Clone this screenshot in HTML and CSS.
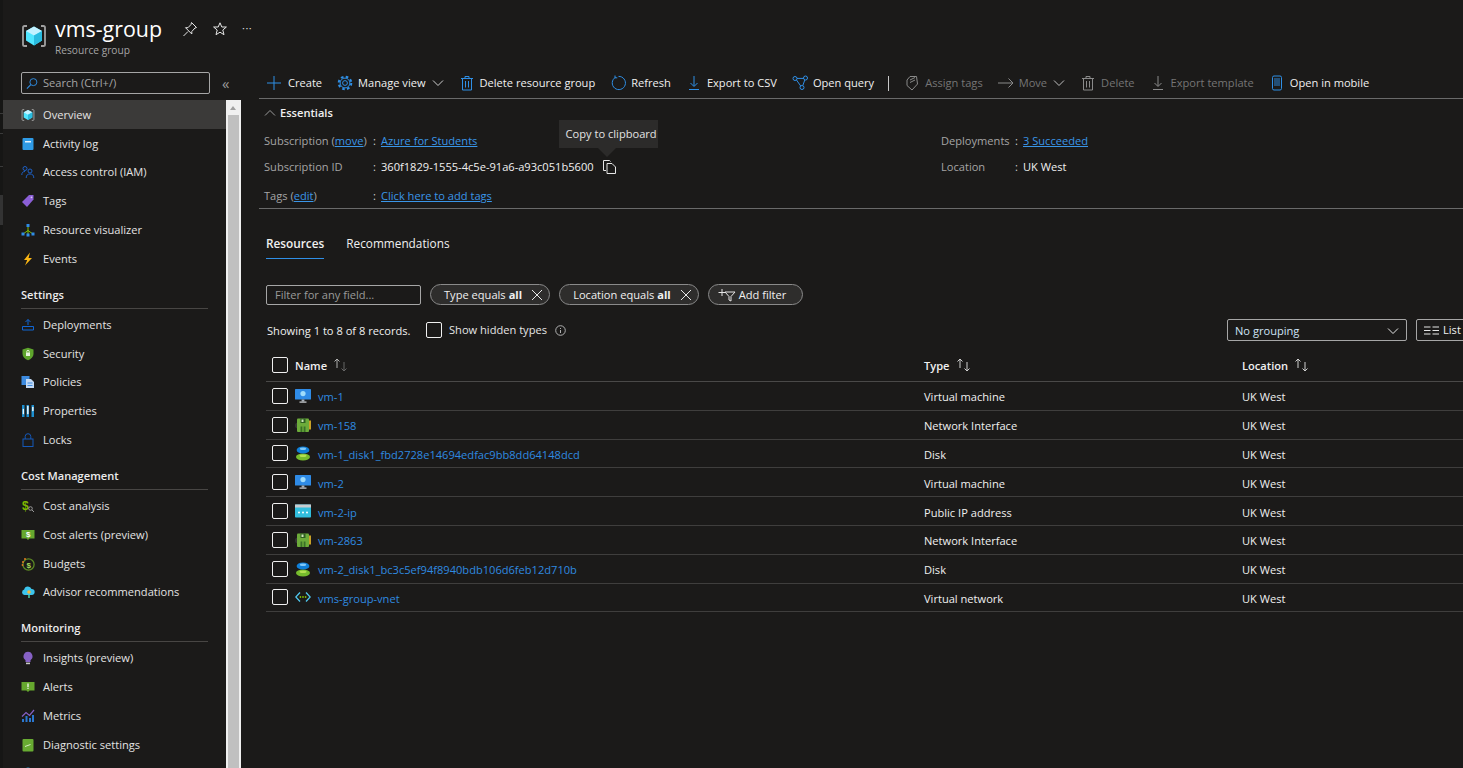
FILE: index.html
```html
<!DOCTYPE html>
<html lang="en">
<head>
<meta charset="utf-8">
<title>vms-group</title>
<link rel="stylesheet" href="styles.css">
</head>
<body>
<svg class="defs" width="0" height="0" aria-hidden="true">
  <symbol id="i-rg" viewBox="0 0 26 26">
    <path d="M6 3H3.600Q2 3 2 4.600V21.400Q2 23 3.600 23H6M20 3h2.400Q24 3 24 4.600V21.400Q24 23 22.400 23H20" fill="none" stroke="#a0a0a0" stroke-width="1.800"/>
    <path d="M13 3.500 21 8v9.600L13 22.500 5 17.600V8z" fill="#50e6ff"/>
    <path d="M13 3.500 21 8l-8 4.600L5 8z" fill="#c3f1ff"/>
    <path d="M13 12.600 21 8v9.600L13 22.500z" fill="#29bade"/>
  </symbol>
  <symbol id="i-vm" viewBox="0 0 16 16">
    <rect x="0" y="1" width="16" height="10.500" rx=".6" fill="#2f8be6"/>
    <circle cx="8" cy="5.600" r="2.600" fill="#9fdcfb"/>
    <path d="M6.600 11.500h2.800v2H6.600z" fill="#a8b0b8"/><path d="M4.500 13.500h7v1.200h-7z" fill="#d0d4d8"/>
  </symbol>
  <symbol id="i-nic" viewBox="0 0 16 16">
    <circle cx="3" cy="8.500" r="3" fill="#333"/>
    <rect x="2" y="1.500" width="12" height="13.500" rx="1" fill="#6cab3a"/>
    <rect x="14" y="3.500" width="2" height="9" fill="#c9a227"/>
    <path d="M5.500 1.500h5V6h-5z" fill="#2f5f22"/>
    <path d="M5.500 9.500h1.800V15H5.500zM8.700 9.500h1.800V15H8.700z" fill="#3a7028"/>
    <rect x="6.500" y="2.500" width="2" height="2.500" fill="#cfe9b8"/>
  </symbol>
  <symbol id="i-disk" viewBox="0 0 16 16">
    <ellipse cx="8" cy="12" rx="7" ry="3.400" fill="#76bc2d"/>
    <ellipse cx="8" cy="10.800" rx="3.500" ry="1.300" fill="#b4e051"/>
    <ellipse cx="8" cy="5" rx="6.400" ry="3.600" fill="#0f7fd8"/>
    <ellipse cx="8" cy="3.800" rx="3.200" ry="1.300" fill="#7fc8f8"/>
  </symbol>
  <symbol id="i-ip" viewBox="0 0 16 16">
    <rect x="0" y="1.500" width="16" height="13" rx=".8" fill="#32bedd"/>
    <rect x="0" y="1.500" width="16" height="3" fill="#c8ccd0"/>
    <circle cx="4" cy="9.500" r="1" fill="#fff"/><circle cx="8" cy="9.500" r="1" fill="#fff"/><circle cx="12" cy="9.500" r="1" fill="#fff"/>
  </symbol>
  <symbol id="i-vnet" viewBox="0 0 16 16">
    <path d="M5 3.500.8 8 5 12.500M11 3.500 15.200 8 11 12.500" fill="none" stroke="#50c8ef" stroke-width="1.300"/>
    <circle cx="5.400" cy="8" r=".9" fill="#7fba00"/><circle cx="8" cy="8" r=".9" fill="#7fba00"/><circle cx="10.600" cy="8" r=".9" fill="#7fba00"/>
  </symbol>
  <symbol id="i-chev" viewBox="0 0 12 8"><path d="M1 1.500 6 6.500l5-5" fill="none" stroke="currentColor"/></symbol>
  <symbol id="i-x" viewBox="0 0 12 12"><path d="M1 1 11 11M11 1 1 11" fill="none" stroke="currentColor"/></symbol>
  <symbol id="i-gear" viewBox="0 0 16 16"><circle cx="8" cy="8" r="2.400" fill="none" stroke="currentColor"/><circle cx="8" cy="8" r="4.900" fill="none" stroke="currentColor"/><circle cx="8" cy="8" r="6.300" fill="none" stroke="currentColor" stroke-width="2" stroke-dasharray="2.600 2.350"/></symbol>
  <symbol id="i-trash" viewBox="0 0 16 16"><path d="M3.500 3.500h9V15h-9zM2 3.500h12M6 3.500V1.500h4v2M6.500 6v6.500M9.500 6v6.500" fill="none" stroke="currentColor"/></symbol>
  <symbol id="i-down" viewBox="0 0 16 16"><path d="M8 1v10M4.500 8 8 11.500 11.500 8M3 14.500h10" fill="none" stroke="currentColor"/></symbol>
</svg>

<div class="app">
  <div class="edge">
    <span class="edge-line first"></span>
    <span class="edge-line second"></span>
    <span class="edge-line third"></span>
    <span class="edge-block"></span>
  </div>
  <aside class="side">
    <header class="title">
      <svg class="title-logo"><use href="#i-rg"/></svg>
      <div class="title-text">
        <h1>vms-group</h1>
        <p>Resource group</p>
      </div>
      <div class="title-actions">
        <svg width="16" height="16" viewBox="0 0 16 16"><path d="M9.500 1.500 14.500 6.500 13 7 9.800 10.500V13L3.500 6.700H6L9 3.500zM6 10.500 1.500 15" fill="none" stroke="#e6e6e6"/></svg>
        <svg width="16" height="16" viewBox="0 0 16 16"><path d="M8 1.800 9.800 6h4.600l-3.600 3 1.200 4.700L8 11.200l-4 2.500L5.200 9 1.600 6h4.600z" fill="none" stroke="#e6e6e6"/></svg>
        <span class="more">···</span>
      </div>
    </header>
    <div class="search-row">
      <label class="search">
        <svg width="12" height="13" viewBox="0 0 13 13"><circle cx="8" cy="5" r="3.800" fill="none" stroke="#2f8fe6"/><path d="M5.200 7.800 1 12" stroke="#2f8fe6" stroke-width="1.200"/></svg>
        <span>Search (Ctrl+/)</span>
      </label>
      <span class="collapse">«</span>
    </div>
    <div class="menu-wrap">
      <nav class="menu">
        <a class="item active"><svg class="mi"><use href="#i-rg"/></svg>Overview</a>
        <a class="item"><svg class="mi" viewBox="0 0 14 14"><rect x="1.500" y="1" width="11" height="12" rx="1" fill="#2f9be6"/><rect x="4" y="4" width="6" height="1.500" fill="#e5f3fd"/></svg>Activity log</a>
        <a class="item"><svg class="mi" viewBox="0 0 14 14"><circle cx="4" cy="3.500" r="2" fill="none" stroke="#1d5fc4"/><path d="M.8 10c0-2.500 1.200-3.500 3.200-3.500" fill="none" stroke="#1d5fc4"/><circle cx="9" cy="6" r="2" fill="none" stroke="#1d5fc4"/><path d="M5.200 13c0-3 1.500-4 3.800-4s3.800 1 3.800 4" fill="none" stroke="#1d5fc4"/></svg>Access control (IAM)</a>
        <a class="item"><svg class="mi" viewBox="0 0 14 14"><path d="M8 1h4.500v4.500L6 13 1 8z" fill="#8b5fd6"/><circle cx="10.500" cy="3.300" r=".9" fill="#d9c9f5"/></svg>Tags</a>
        <a class="item"><svg class="mi" viewBox="0 0 14 14"><path d="M7 4v4M7 7.500 2 11M7 7.500l5 3.500M7 7.500V12" stroke="#7fba00" fill="none"/><rect x="5.500" y="1" width="3" height="3" fill="#2f8be6"/><rect x=".5" y="9.500" width="3" height="3" fill="#2f8be6"/><rect x="5.500" y="10.500" width="3" height="3" fill="#2f8be6"/><rect x="10.500" y="9.500" width="3" height="3" fill="#2f8be6"/></svg>Resource visualizer</a>
        <a class="item"><svg class="mi" viewBox="0 0 14 14"><path d="M9 .5 3 8h3.200L4 13.500 11 6H7.500z" fill="#fcb714"/></svg>Events</a>

        <h2>Settings</h2>
        <a class="item"><svg class="mi" viewBox="0 0 14 14"><path d="M1.500 8.500h11v3.500h-11zM7 7V1.500M4.500 4 7 1.500 9.500 4" fill="none" stroke="#1166d4"/></svg>Deployments</a>
        <a class="item"><svg class="mi" viewBox="0 0 14 14"><path d="M7 .8 12.500 2.500V7c0 3-2.500 5-5.500 6.300C4 12 1.500 10 1.500 7V2.500z" fill="#5ea42c"/><rect x="5" y="5.500" width="4" height="3.500" fill="#e8f3dc"/><path d="M5.800 5.500V4.500a1.200 1.200 0 0 1 2.400 0v1" fill="none" stroke="#e8f3dc"/></svg>Security</a>
        <a class="item"><svg class="mi" viewBox="0 0 14 14"><rect x=".5" y="1" width="8" height="9" fill="#3d8be0"/><path d="M5 4h5l3 3v6H5z" fill="#c3daf5"/><path d="M6.500 8h5M6.500 10.500h5" stroke="#3d8be0"/></svg>Policies</a>
        <a class="item"><svg class="mi" viewBox="0 0 14 14"><path d="M1 1h2.500v12H1zM5.500 1H8v12H5.500zM10.500 1H13v12h-2.500z" fill="#1c8fd0"/><path d="M2.200 5h.3v5h-.3zM6.700 2h.3v8h-.3zM11.700 3h.3v4h-.3z" fill="#e6f4fb" stroke="#e6f4fb"/></svg>Properties</a>
        <a class="item"><svg class="mi" viewBox="0 0 14 14"><rect x="2" y="6" width="10" height="7.500" fill="none" stroke="#1558b8"/><path d="M4.200 6V3.500a2.800 2.800 0 0 1 5.600 0V6" fill="none" stroke="#1558b8"/></svg>Locks</a>

        <h2>Cost Management</h2>
        <a class="item"><svg class="mi" viewBox="0 0 14 14"><text class="glyph" x="1" y="11" fill="#7fba00">$</text><circle cx="9.500" cy="9.500" r="1.800" fill="none" stroke="#999"/><path d="M11 11l2 2" stroke="#999"/></svg>Cost analysis</a>
        <a class="item"><svg class="mi" viewBox="0 0 14 14"><path d="M.5 2h13v8.500H8.500L7 12 5.500 10.500h-5z" fill="#66a82e"/><text class="glyph small" x="5" y="8.500" fill="#fff">$</text></svg>Cost alerts (preview)</a>
        <a class="item"><svg class="mi" viewBox="0 0 14 14"><circle cx="7.500" cy="7.500" r="5.600" fill="none" stroke="#5c8a24" stroke-width="1.300"/><text class="glyph small" x="5.500" y="10.500" fill="#a4d957">$</text><circle cx="2" cy="5" r="1" fill="#e07a1f"/><circle cx="4" cy="2" r="1" fill="#e07a1f"/><circle cx="1.500" cy="8" r=".9" fill="#e07a1f"/></svg>Budgets</a>
        <a class="item"><svg class="mi" viewBox="0 0 14 14"><path d="M3.500 10a2.800 2.800 0 0 1-.3-5.500A3.800 3.800 0 0 1 10.500 4a3 3 0 0 1 .3 6z" fill="#3cc4ec"/><circle cx="8" cy="7" r="1.800" fill="#f5b73a"/><path d="M7.200 10h1.600v3H7.200z" fill="#49c6a0"/></svg>Advisor recommendations</a>

        <h2>Monitoring</h2>
        <a class="item"><svg class="mi" viewBox="0 0 14 14"><path d="M7 .8a4.600 4.600 0 0 1 2.500 8.400V11h-5V9.200A4.600 4.600 0 0 1 7 .8z" fill="#8661c5"/><rect x="5" y="11.600" width="4" height="1.600" fill="#c8c8c8"/></svg>Insights (preview)</a>
        <a class="item"><svg class="mi" viewBox="0 0 14 14"><path d="M.5 2h13v8.500H8.500L7 12 5.500 10.500h-5z" fill="#66a82e"/><rect x="6.400" y="3.500" width="1.200" height="3.500" fill="#fff"/><rect x="6.400" y="7.700" width="1.200" height="1.200" fill="#fff"/></svg>Alerts</a>
        <a class="item"><svg class="mi" viewBox="0 0 14 14"><path d="M1 10h2v3H1zM4.500 7h2v6h-2zM8 9h2v4H8zM11 6h2v7h-2z" fill="#2a77d0"/><path d="M1 7.500 5 3.500l3.500 3L13 1" fill="none" stroke="#8661c5" stroke-width="1.200"/></svg>Metrics</a>
        <a class="item"><svg class="mi" viewBox="0 0 14 14"><rect x="1.500" y="1" width="11" height="12.500" rx="1" fill="#68ab32"/><path d="M4 8.500 9.500 6.500" stroke="#d8edc4"/></svg>Diagnostic settings</a>
        <a class="item"><svg class="mi" viewBox="0 0 14 14"><circle cx="7" cy="5" r="4.500" fill="#2fa0e0"/></svg></a>
      </nav>
      <div class="scrollbar">
        <span class="arrow"></span>
        <span class="thumb"></span>
      </div>
    </div>
  </aside>

  <main class="main">
    <div class="toolbar">
      <a class="tool"><svg class="ti" viewBox="0 0 16 16"><path d="M7 1v14M0 8h14" stroke="currentColor" fill="none"/></svg>Create</a>
      <a class="tool"><svg class="ti"><use href="#i-gear"/></svg>Manage view<svg class="chev"><use href="#i-chev"/></svg></a>
      <a class="tool"><svg class="ti"><use href="#i-trash"/></svg>Delete resource group</a>
      <a class="tool"><svg class="ti" viewBox="0 0 16 16"><path d="M5.500 2.300a6.600 6.600 0 1 0 3-.9M5 .5v2.300h2.300" fill="none" stroke="currentColor"/></svg>Refresh</a>
      <a class="tool"><svg class="ti"><use href="#i-down"/></svg>Export to CSV</a>
      <a class="tool"><svg class="ti" viewBox="0 0 16 16"><circle cx="3" cy="3.500" r="2" fill="none" stroke="currentColor"/><circle cx="13.500" cy="3" r="2" fill="none" stroke="currentColor"/><circle cx="10" cy="12.500" r="2" fill="none" stroke="currentColor"/><path d="M5 3.400h6.500M4.500 5l4.200 6M12.800 5l-2 5.500" fill="none" stroke="currentColor"/></svg>Open query</a>
      <span class="tool-sep"></span>
      <a class="tool off"><svg class="ti" viewBox="0 0 16 16"><path d="M6 1.500h6.500l1 7.500L8 15 3 10.500V5zM6 5l5-2.500M6 7.500l5-2.500" fill="none" stroke="currentColor"/></svg>Assign tags</a>
      <a class="tool off"><svg class="ti" viewBox="0 0 16 16"><path d="M0 8h15M10.500 3.500 15 8l-4.500 4.500" fill="none" stroke="currentColor"/></svg>Move<svg class="chev"><use href="#i-chev"/></svg></a>
      <a class="tool off"><svg class="ti"><use href="#i-trash"/></svg>Delete</a>
      <a class="tool off"><svg class="ti"><use href="#i-down"/></svg>Export template</a>
      <a class="tool"><svg class="ti" viewBox="0 0 16 16"><rect x="3.500" y="1" width="9" height="14" rx="1.500" fill="none" stroke="currentColor"/><path d="M5 3h6v8H5z" fill="currentColor" opacity=".45"/></svg>Open in mobile</a>
    </div>

    <section class="essentials">
      <div class="ess-head"><svg width="12" height="8" class="up"><use href="#i-chev"/></svg><strong>Essentials</strong></div>
      <div class="ess-grid">
        <div class="ess-col">
          <div class="row r1"><span class="k">Subscription (<a>move</a>)</span><span class="c">:</span><a>Azure for Students</a></div>
          <div class="row r2"><span class="k">Subscription ID</span><span class="c">:</span><span class="v">360f1829-1555-4c5e-91a6-a93c051b5600</span>
            <span class="copy">
              <svg width="13" height="14" viewBox="0 0 13 14"><path d="M3 10.500H.5V.5h6l1 1M4 3.500h5l3.500 3.500v6.500H4z" fill="none" stroke="#e6e6e6"/></svg>
              <span class="tip">Copy to clipboard</span>
            </span>
          </div>
          <div class="row r3"><span class="k">Tags (<a>edit</a>)</span><span class="c">:</span><a>Click here to add tags</a></div>
        </div>
        <div class="ess-col right">
          <div class="row r1"><span class="k">Deployments</span><span class="c">:</span><a>3 Succeeded</a></div>
          <div class="row r2"><span class="k">Location</span><span class="c">:</span><span class="v">UK West</span></div>
        </div>
      </div>
    </section>

    <div class="tabs">
      <a class="tab on">Resources</a>
      <a class="tab">Recommendations</a>
    </div>

    <div class="filters">
      <span class="field">Filter for any field...</span>
      <span class="pill">Type equals <b>all</b><svg class="px"><use href="#i-x"/></svg></span>
      <span class="pill">Location equals <b>all</b><svg class="px"><use href="#i-x"/></svg></span>
      <span class="pill add"><svg class="pf" viewBox="0 0 18 14"><path d="M4 1v7M.5 4.500h7M7 4h10l-4 4.500V13l-2-1V8.500z" fill="none" stroke="#e6e6e6"/></svg>Add filter</span>
    </div>

    <div class="records">
      <span class="count">Showing 1 to 8 of 8 records.</span>
      <span class="box"></span>
      <span class="hidden-label">Show hidden types</span>
      <svg class="info" width="11" height="11" viewBox="0 0 11 11"><circle cx="5.500" cy="5.500" r="4.800" fill="none" stroke="#b0b0b0"/><path d="M5.500 5v3M5.500 3v1" stroke="#b0b0b0"/></svg>
      <span class="grouping">No grouping<svg class="chev"><use href="#i-chev"/></svg></span>
      <span class="listbtn"><svg width="15" height="9" viewBox="0 0 15 9"><path d="M0 1h6.500M0 4.500h6.500M0 8h6.500M8.500 1H15M8.500 4.500H15M8.500 8H15" stroke="#e6e6e6"/></svg>List view</span>
    </div>

    <div class="table">
      <div class="tr th">
        <span class="td-name"><span class="box"></span><b>Name</b><svg class="sort dim" viewBox="0 0 16 14"><path class="up-a" d="M4 10V1M1.500 3.500 4 1l2.500 2.500" fill="none"/><path class="down-a" d="M11 4v9M8.500 10.500 11 13l2.500-2.500" fill="none"/></svg></span>
        <span class="td-type"><b>Type</b><svg class="sort" viewBox="0 0 16 14"><path class="up-a" d="M4 10V1M1.500 3.500 4 1l2.500 2.500" fill="none"/><path class="down-a" d="M11 4v9M8.500 10.500 11 13l2.500-2.500" fill="none"/></svg></span>
        <span class="td-loc"><b>Location</b><svg class="sort" viewBox="0 0 16 14"><path class="up-a" d="M4 10V1M1.500 3.500 4 1l2.500 2.500" fill="none"/><path class="down-a" d="M11 4v9M8.500 10.500 11 13l2.500-2.500" fill="none"/></svg></span>
      </div>
      <div class="tr"><span class="td-name"><span class="box"></span><svg class="ri"><use href="#i-vm"/></svg><a>vm-1</a></span><span class="td-type">Virtual machine</span><span class="td-loc">UK West</span></div>
      <div class="tr"><span class="td-name"><span class="box"></span><svg class="ri"><use href="#i-nic"/></svg><a>vm-158</a></span><span class="td-type">Network Interface</span><span class="td-loc">UK West</span></div>
      <div class="tr"><span class="td-name"><span class="box"></span><svg class="ri"><use href="#i-disk"/></svg><a>vm-1_disk1_fbd2728e14694edfac9bb8dd64148dcd</a></span><span class="td-type">Disk</span><span class="td-loc">UK West</span></div>
      <div class="tr"><span class="td-name"><span class="box"></span><svg class="ri"><use href="#i-vm"/></svg><a>vm-2</a></span><span class="td-type">Virtual machine</span><span class="td-loc">UK West</span></div>
      <div class="tr"><span class="td-name"><span class="box"></span><svg class="ri"><use href="#i-ip"/></svg><a>vm-2-ip</a></span><span class="td-type">Public IP address</span><span class="td-loc">UK West</span></div>
      <div class="tr"><span class="td-name"><span class="box"></span><svg class="ri"><use href="#i-nic"/></svg><a>vm-2863</a></span><span class="td-type">Network Interface</span><span class="td-loc">UK West</span></div>
      <div class="tr"><span class="td-name"><span class="box"></span><svg class="ri"><use href="#i-disk"/></svg><a>vm-2_disk1_bc3c5ef94f8940bdb106d6feb12d710b</a></span><span class="td-type">Disk</span><span class="td-loc">UK West</span></div>
      <div class="tr"><span class="td-name"><span class="box"></span><svg class="ri"><use href="#i-vnet"/></svg><a>vms-group-vnet</a></span><span class="td-type">Virtual network</span><span class="td-loc">UK West</span></div>
    </div>
  </main>
</div>
</body>
</html>
```

FILE: styles.css
```css
* { box-sizing: border-box; }
html, body { margin: 0; height: 100%; overflow: hidden; }
body {
  background: #1b1a19;
  color: #f0f0f0;
  font-family: "Open Sans", "Noto Sans", "Liberation Sans", sans-serif;
  font-size: 11.1px;
  line-height: 16px;
}
a { color: #3a96e8; }
.defs { position: absolute; }
.app { display: flex; height: 768px; width: 1463px; overflow: hidden; }

/* Left edge of the window behind */
.edge { width: 3px; flex: none; display: flex; flex-direction: column; background: #161615; }
.edge-line { height: 1px; background: #3a3a3a; flex: none; }
.edge-line.first { margin-top: 113px; }
.edge-line.second { margin-top: 19px; }
.edge-line.third { margin-top: 32px; }
.edge-block { height: 30px; margin-top: 28px; background: #333; flex: none; }

/* Left column */
.side { width: 238px; flex: none; display: flex; flex-direction: column; height: 768px; }
.title { height: 66px; display: flex; padding: 15px 0 0 18px; flex: none; }
.title-logo { width: 26px; height: 26px; margin-top: 8px; flex: none; }
.title-text { margin-left: 8px; width: 127px; flex: none; }
.title-text h1 { margin: 0; font-size: 21.4px; line-height: 28px; font-weight: 400; color: #fff; }
.title-text p { margin: 0; font-size: 10.2px; line-height: 14px; color: #a5a5a5; }
.title-actions { display: flex; gap: 14px; align-items: flex-start; padding-top: 6px; flex: none; }
.more { font-size: 11px; line-height: 14px; letter-spacing: .5px; color: #ddd; }

.search-row { display: flex; align-items: center; height: 34px; flex: none; padding: 0 0 0 18px; }
.search { width: 189px; height: 22px; border: 1px solid #a6a6a6; border-radius: 2px; display: flex; align-items: center; gap: 5px; padding: 0 4px; color: #a5a5a5; }
.collapse { margin-left: 12px; color: #9a9a9a; font-size: 15px; line-height: 20px; }

.menu-wrap { display: flex; flex: 1; min-height: 0; }
.menu { width: 223px; flex: none; overflow: hidden; }
.item { display: flex; align-items: center; height: 28.8px; padding: 1px 0 0 18px; color: #e3e3e3; }
.item.active { background: #3b3a39; }
.mi { width: 14px; height: 14px; margin-right: 8px; flex: none; }
.menu h2 { margin: 0 18px 1.2px; font-size: 11.1px; line-height: 16px; font-weight: 600; color: #ececec; padding-top: 14px; border-bottom: 1px solid #484644; height: 36px; }
.scrollbar { width: 15px; flex: none; background: #c0c0c0; border-left: 2px solid #f0f0f0; border-right: 2px solid #f0f0f0; display: flex; flex-direction: column; }
.arrow { height: 15px; background: #f0f0f0; position: relative; flex: none; }
.arrow::before { content: ""; position: absolute; left: 2px; top: 6px; border: 3.5px solid transparent; border-top: 0; border-bottom: 4px solid #a0a0a0; }
.thumb { flex: 1; }

/* Main column */
.main { flex: 1; min-width: 0; padding-left: 18px; }
.toolbar { display: flex; align-items: center; height: 33px; margin-top: 66px; padding: 2px 0 0 8px; border-bottom: 1px solid #6a6a6a; white-space: nowrap; }
.tool { display: flex; align-items: center; gap: 5px; margin-right: 15px; color: #f0f0f0; }
.ti { width: 16px; height: 16px; flex: none; color: #2f8fe6; }
.tool .chev { width: 12px; height: 8px; color: #d0d0d0; margin-left: 1px; }
.tool.off { color: #757575; }
.tool.off .ti { color: #8a8a8a; }
.tool.off .chev { color: #c0c0c0; }
.tool-sep { width: 1px; height: 15px; background: #c8c8c8; margin: 0 15px 0 -1px; flex: none; }

.essentials { border-bottom: 1px solid #6a6a6a; height: 110px; padding-left: 5px; }
.ess-head { display: flex; align-items: center; gap: 4px; height: 28px; margin-bottom: 1px; }
.ess-head .up { transform: rotate(180deg); color: #9a9a9a; }
.ess-head strong { font-weight: 600; color: #f0f0f0; }
.ess-grid { display: flex; }
.ess-col { width: 677px; flex: none; }
.row { display: flex; align-items: center; height: 26px; white-space: nowrap; }
.row.r3 { height: 32px; }
.k { width: 109px; flex: none; color: #a5a5a5; }
.c { width: 8px; flex: none; color: #d0d0d0; }
.row a { text-decoration: underline; }
.right .k { width: 74px; }
.v { color: #f0f0f0; }
.copy { position: relative; margin-left: 9px; display: flex; }
.tip { position: absolute; left: -44px; bottom: 26px; background: #2c2b2a; color: #e3e3e3; padding: 6px 7px; width: 99px; height: 28px; white-space: nowrap; }
.tip::after { content: ""; position: absolute; left: 39px; top: 28px; border: 9px solid transparent; border-top: 9px solid #2c2b2a; border-bottom: 0; }

.tabs { display: flex; gap: 22px; margin-top: 18px; padding-left: 7px; height: 32px; }
.tab { font-size: 11.8px; color: #f0f0f0; padding-top: 8px; height: 32px; }
.tab.on { font-weight: 600; border-bottom: 1px solid #2f8fe6; }

.filters { display: flex; align-items: center; margin-top: 25px; padding-left: 7px; height: 21px; gap: 9px; }
.field { width: 155px; height: 20px; border: 1px solid #a6a6a6; border-radius: 2px; padding-left: 8px; color: #9a9a9a; line-height: 18px; }
.pill { height: 21px; border: 1px solid #8a8a8a; border-radius: 11px; background: #2e2d2c; display: flex; align-items: center; padding: 0 6px 0 13px; white-space: nowrap; color: #f0f0f0; }
.pill b { font-weight: 700; margin-left: 3px; }
.px { width: 12px; height: 12px; margin-left: 9px; color: #e6e6e6; }
.pill.add { padding: 0 16px 0 9px; }
.pf { width: 18px; height: 14px; margin-right: 3px; }

.records { display: flex; align-items: center; height: 24px; margin-top: 13px; padding-left: 7px; white-space: nowrap; }
.count { width: 160px; flex: none; padding: 1px 0 0 1px; }
.box { width: 16px; height: 16px; border: 1px solid #f0f0f0; border-radius: 2px; flex: none; display: inline-block; }
.hidden-label { margin-left: 7px; width: 106px; flex: none; color: #e6e6e6; }
.info { flex: none; }
.grouping { margin-left: 661px; width: 180px; height: 22px; flex: none; border: 1px solid #a6a6a6; border-radius: 2px; display: flex; align-items: center; justify-content: space-between; padding: 1px 6px 0 7px; color: #cfe4f7; }
.grouping .chev { width: 14px; height: 8px; color: #e6e6e6; }
.listbtn { margin-left: 9px; width: 80px; height: 22px; flex: none; border: 1px solid #a6a6a6; border-radius: 2px; display: flex; align-items: center; gap: 4px; padding-left: 7px; }

.table { margin-top: 7px; padding-left: 7px; }
.tr { display: flex; align-items: center; height: 28.8px; border-bottom: 1px solid #3f3e3d; width: 1300px; }
.tr.th { height: 33px; border-bottom-color: #4a4948; }
.td-name { width: 658px; flex: none; display: flex; align-items: center; padding-left: 6px; }
.td-name .box { margin-right: 7px; }
.td-name a { margin-left: 7px; padding-top: 3px; color: #2f8ae0; }
.td-type { width: 318px; flex: none; display: flex; align-items: center; padding-top: 3px; }
.td-loc { display: flex; align-items: center; padding-top: 3px; }
.th .td-type, .th .td-loc { padding-top: 0; }
.th b { font-weight: 600; padding-top: 2px; }
.sort { width: 16px; height: 14px; margin-left: 6px; margin-top: -1px; }
.up-a, .down-a { stroke: #d0d0d0; }
.sort.dim .down-a { stroke: #666; }
.sort.dim .up-a { stroke: #b0b0b0; }
.ri { width: 16px; height: 16px; flex: none; }
.glyph { font-family: "Liberation Sans", sans-serif; font-size: 12px; font-weight: 700; }
.glyph.small { font-size: 8px; }
```
